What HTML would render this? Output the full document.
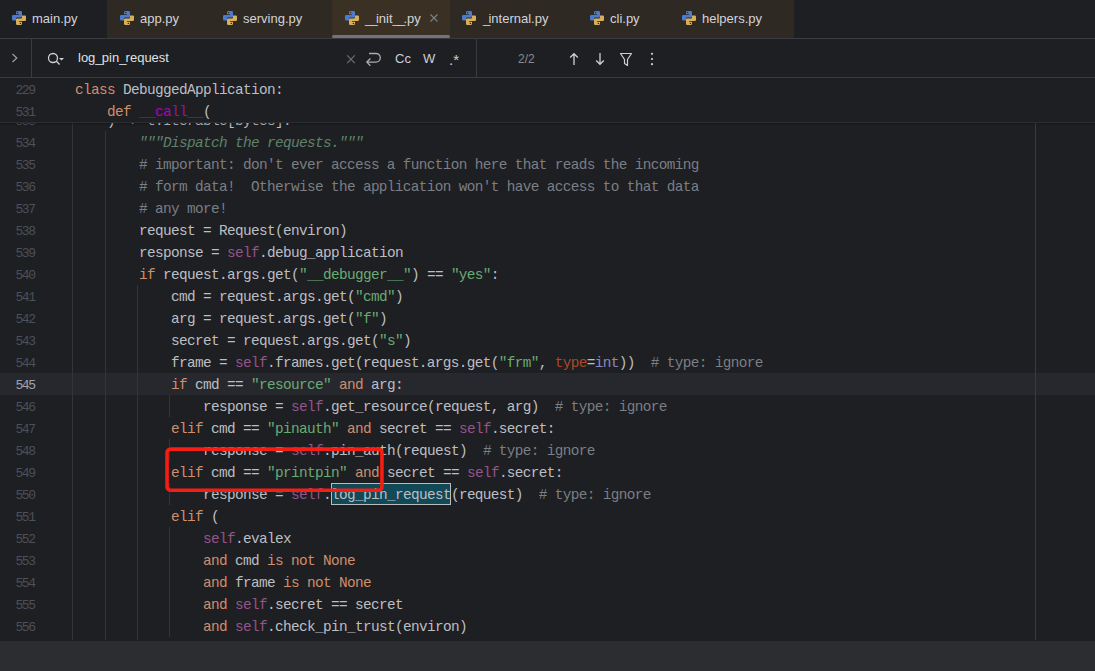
<!DOCTYPE html>
<html><head><meta charset="utf-8">
<style>
html,body{margin:0;padding:0;}
body{width:1095px;height:671px;position:relative;overflow:hidden;background:#1E1F22;font-family:"Liberation Sans",sans-serif;}
.abs{position:absolute;}
.tab{position:absolute;top:0;height:38px;}
.pyi{position:absolute;}
.tt{position:absolute;top:0;height:38px;line-height:38px;font-size:13px;color:#D2D4D9;white-space:pre;}
.ind{position:absolute;top:35px;height:3px;background:#6F737A;border-radius:2px;}
.hl{position:absolute;left:0;width:1095px;height:1px;background:#393B40;}
.vl{position:absolute;width:1px;background:#393B40;}
.ln{position:absolute;left:0;width:34.7px;margin-top:2px;text-align:right;font-family:"Liberation Mono",monospace;font-size:13px;letter-spacing:-1.4px;line-height:22px;height:22px;color:#4B5059;}
.ln.cur{color:#A1A3AB;}
.cl{position:absolute;margin-top:1px;font-family:"Liberation Mono",monospace;font-size:14.4px;letter-spacing:-0.64px;line-height:22px;height:22px;color:#BCBEC4;white-space:pre;}
.u{letter-spacing:-1.8px}
.k{color:#CF8E6D} .s{color:#6AAB73} .c{color:#7A7E85} .d{color:#5F826B;font-style:italic}
.sf{color:#94558D} .mg{color:#B200B2} .kw{color:#AA4926} .bi{color:#8888C6}
.ig{position:absolute;width:1px;background:#313438;}
</style></head><body>
<!-- tabs -->
<div class="tab" style="left:0px;width:107px;background:#1E1F22"></div><svg class="pyi" style="left:12px;top:11px" width="14" height="14" viewBox="0 0 14 14"><path fill="#4A7BD0" d="M4 1.2Q4 0 5.2 0H8.8Q10 0 10 1.2V5.6Q10 6.6 9 6.6H5Q4 6.6 4 7.6V9.5H1.2Q0 9.5 0 8.3V5.2Q0 4 1.2 4H7V3.2H4Z"/><path fill="#D6AF5C" d="M10 12.8Q10 14 8.8 14H5.2Q4 14 4 12.8V8.4Q4 7.4 5 7.4H9Q10 7.4 10 6.4V4.5H12.8Q14 4.5 14 5.7V8.8Q14 10 12.8 10H7V10.8H10Z"/><circle cx="5.6" cy="1.6" r="0.7" fill="#1E1F22"/><circle cx="8.4" cy="12.4" r="0.7" fill="#1E1F22"/></svg><div class="tt" style="left:32px">main.py</div><div class="tab" style="left:107px;width:108px;background:#2E2922"></div><svg class="pyi" style="left:120px;top:11px" width="14" height="14" viewBox="0 0 14 14"><path fill="#4A7BD0" d="M4 1.2Q4 0 5.2 0H8.8Q10 0 10 1.2V5.6Q10 6.6 9 6.6H5Q4 6.6 4 7.6V9.5H1.2Q0 9.5 0 8.3V5.2Q0 4 1.2 4H7V3.2H4Z"/><path fill="#D6AF5C" d="M10 12.8Q10 14 8.8 14H5.2Q4 14 4 12.8V8.4Q4 7.4 5 7.4H9Q10 7.4 10 6.4V4.5H12.8Q14 4.5 14 5.7V8.8Q14 10 12.8 10H7V10.8H10Z"/><circle cx="5.6" cy="1.6" r="0.7" fill="#1E1F22"/><circle cx="8.4" cy="12.4" r="0.7" fill="#1E1F22"/></svg><div class="tt" style="left:140px">app.py</div><div class="tab" style="left:215px;width:117px;background:#2E2922"></div><svg class="pyi" style="left:223px;top:11px" width="14" height="14" viewBox="0 0 14 14"><path fill="#4A7BD0" d="M4 1.2Q4 0 5.2 0H8.8Q10 0 10 1.2V5.6Q10 6.6 9 6.6H5Q4 6.6 4 7.6V9.5H1.2Q0 9.5 0 8.3V5.2Q0 4 1.2 4H7V3.2H4Z"/><path fill="#D6AF5C" d="M10 12.8Q10 14 8.8 14H5.2Q4 14 4 12.8V8.4Q4 7.4 5 7.4H9Q10 7.4 10 6.4V4.5H12.8Q14 4.5 14 5.7V8.8Q14 10 12.8 10H7V10.8H10Z"/><circle cx="5.6" cy="1.6" r="0.7" fill="#1E1F22"/><circle cx="8.4" cy="12.4" r="0.7" fill="#1E1F22"/></svg><div class="tt" style="left:243px">serving.py</div><div class="tab" style="left:332px;width:118px;background:#3A3124"></div><svg class="pyi" style="left:345px;top:11px" width="14" height="14" viewBox="0 0 14 14"><path fill="#4A7BD0" d="M4 1.2Q4 0 5.2 0H8.8Q10 0 10 1.2V5.6Q10 6.6 9 6.6H5Q4 6.6 4 7.6V9.5H1.2Q0 9.5 0 8.3V5.2Q0 4 1.2 4H7V3.2H4Z"/><path fill="#D6AF5C" d="M10 12.8Q10 14 8.8 14H5.2Q4 14 4 12.8V8.4Q4 7.4 5 7.4H9Q10 7.4 10 6.4V4.5H12.8Q14 4.5 14 5.7V8.8Q14 10 12.8 10H7V10.8H10Z"/><circle cx="5.6" cy="1.6" r="0.7" fill="#1E1F22"/><circle cx="8.4" cy="12.4" r="0.7" fill="#1E1F22"/></svg><div class="tt" style="left:365px"><span class="u">_</span><span class="u">_</span>init<span class="u">_</span><span class="u">_</span>.py</div><div class="ind" style="left:332px;width:118px"></div><svg style="position:absolute;left:428px;top:12px" width="12" height="12" viewBox="0 0 12 12"><path d="M2.5 2.5L9.5 9.5M9.5 2.5L2.5 9.5" stroke="#7E8188" stroke-width="1.1"/></svg><div class="tab" style="left:450px;width:120px;background:#2E2922"></div><svg class="pyi" style="left:462px;top:11px" width="14" height="14" viewBox="0 0 14 14"><path fill="#4A7BD0" d="M4 1.2Q4 0 5.2 0H8.8Q10 0 10 1.2V5.6Q10 6.6 9 6.6H5Q4 6.6 4 7.6V9.5H1.2Q0 9.5 0 8.3V5.2Q0 4 1.2 4H7V3.2H4Z"/><path fill="#D6AF5C" d="M10 12.8Q10 14 8.8 14H5.2Q4 14 4 12.8V8.4Q4 7.4 5 7.4H9Q10 7.4 10 6.4V4.5H12.8Q14 4.5 14 5.7V8.8Q14 10 12.8 10H7V10.8H10Z"/><circle cx="5.6" cy="1.6" r="0.7" fill="#1E1F22"/><circle cx="8.4" cy="12.4" r="0.7" fill="#1E1F22"/></svg><div class="tt" style="left:483px"><span class="u">_</span>internal.py</div><div class="tab" style="left:570px;width:92px;background:#2E2922"></div><svg class="pyi" style="left:590px;top:11px" width="14" height="14" viewBox="0 0 14 14"><path fill="#4A7BD0" d="M4 1.2Q4 0 5.2 0H8.8Q10 0 10 1.2V5.6Q10 6.6 9 6.6H5Q4 6.6 4 7.6V9.5H1.2Q0 9.5 0 8.3V5.2Q0 4 1.2 4H7V3.2H4Z"/><path fill="#D6AF5C" d="M10 12.8Q10 14 8.8 14H5.2Q4 14 4 12.8V8.4Q4 7.4 5 7.4H9Q10 7.4 10 6.4V4.5H12.8Q14 4.5 14 5.7V8.8Q14 10 12.8 10H7V10.8H10Z"/><circle cx="5.6" cy="1.6" r="0.7" fill="#1E1F22"/><circle cx="8.4" cy="12.4" r="0.7" fill="#1E1F22"/></svg><div class="tt" style="left:610px">cli.py</div><div class="tab" style="left:662px;width:132px;background:#2E2922"></div><svg class="pyi" style="left:682px;top:11px" width="14" height="14" viewBox="0 0 14 14"><path fill="#4A7BD0" d="M4 1.2Q4 0 5.2 0H8.8Q10 0 10 1.2V5.6Q10 6.6 9 6.6H5Q4 6.6 4 7.6V9.5H1.2Q0 9.5 0 8.3V5.2Q0 4 1.2 4H7V3.2H4Z"/><path fill="#D6AF5C" d="M10 12.8Q10 14 8.8 14H5.2Q4 14 4 12.8V8.4Q4 7.4 5 7.4H9Q10 7.4 10 6.4V4.5H12.8Q14 4.5 14 5.7V8.8Q14 10 12.8 10H7V10.8H10Z"/><circle cx="5.6" cy="1.6" r="0.7" fill="#1E1F22"/><circle cx="8.4" cy="12.4" r="0.7" fill="#1E1F22"/></svg><div class="tt" style="left:702px">helpers.py</div>
<div class="hl" style="top:38px"></div>
<!-- find bar -->
<div class="vl" style="left:31px;top:39px;height:38px"></div>
<div class="vl" style="left:476px;top:39px;height:38px"></div>
<svg class="abs" style="left:10px;top:52px" width="10" height="12" viewBox="0 0 10 12"><path d="M2.5 2L6.8 6L2.5 10" fill="none" stroke="#9DA0A8" stroke-width="1.2"/></svg>
<svg class="abs" style="left:46px;top:50px" width="20" height="18" viewBox="0 0 20 18"><circle cx="7" cy="8" r="4.5" fill="none" stroke="#CED0D6" stroke-width="1.3"/><path d="M10.4 11.3L13.6 14.5" stroke="#CED0D6" stroke-width="1.3"/><path d="M13 8H18L15.5 10.6Z" fill="#CED0D6"/></svg>
<div class="abs" style="left:78px;top:39px;height:38px;line-height:38px;font-size:13px;color:#DFE1E5">log<span style="letter-spacing:-0.8px">_</span>pin<span style="letter-spacing:-0.8px">_</span>request</div>
<svg class="abs" style="left:345px;top:53px" width="12" height="12" viewBox="0 0 12 12"><path d="M2.2 2.45L9.8 10.05M9.8 2.45L2.2 10.05" stroke="#6F737A" stroke-width="1.1"/></svg>
<svg class="abs" style="left:364px;top:51px" width="18" height="16" viewBox="0 0 18 16"><path d="M5 2.5H12A4.3 4.3 0 0 1 12 11.1H2.8M6.4 7.5L2.8 11.1L6.4 14.7" fill="none" stroke="#A8ABB0" stroke-width="1.3"/></svg>
<div class="abs" style="left:395px;top:40px;height:38px;line-height:38px;font-size:13px;color:#CED0D6">Cc</div>
<div class="abs" style="left:423px;top:40px;height:38px;line-height:38px;font-size:13px;color:#CED0D6">W</div>
<div class="abs" style="left:449px;top:41px;height:38px;line-height:38px;font-size:15px;color:#CED0D6">.*</div>
<div class="abs" style="left:518px;top:40px;height:38px;line-height:38px;font-size:12px;color:#868A91">2/2</div>
<svg class="abs" style="left:566px;top:51px" width="16" height="16" viewBox="0 0 16 16"><path d="M8 2.5V14M4.2 6.5L8 2.7L11.8 6.5" fill="none" stroke="#CED0D6" stroke-width="1.3"/></svg>
<svg class="abs" style="left:592px;top:51px" width="16" height="16" viewBox="0 0 16 16"><path d="M8 2V13.5M4.2 9.5L8 13.3L11.8 9.5" fill="none" stroke="#CED0D6" stroke-width="1.3"/></svg>
<svg class="abs" style="left:618px;top:51px" width="16" height="16" viewBox="0 0 16 16"><path d="M2.5 2.5H13.5L9.5 8.5V14.5L6.5 12.5V8.5Z" fill="none" stroke="#CED0D6" stroke-width="1.2" stroke-linejoin="round"/></svg>
<svg class="abs" style="left:644px;top:51px" width="16" height="16" viewBox="0 0 16 16"><circle cx="8" cy="2.8" r="1.1" fill="#CED0D6"/><circle cx="8" cy="8" r="1.1" fill="#CED0D6"/><circle cx="8" cy="13.2" r="1.1" fill="#CED0D6"/></svg>
<div class="hl" style="top:77px"></div>
<!-- editor -->
<div class="abs" style="left:0;top:373px;width:1095px;height:22px;background:#26282E"></div>
<div class="ig" style="left:72px;top:123px;height:517px"></div>
<div class="ig" style="left:105px;top:131px;height:509px"></div>
<div class="ig" style="left:137px;top:285px;height:355px"></div>
<div class="ig" style="left:169px;top:527px;height:110px"></div>
<div class="ig" style="left:169px;top:395px;height:22px"></div>
<div class="ig" style="left:169px;top:439px;height:22px"></div>
<div class="ig" style="left:169px;top:483px;height:22px"></div>
<div class="ig" style="left:1035px;top:78px;height:562px;background:#393B40"></div>
<div class="abs" style="left:331px;top:483px;width:118px;height:20px;background:#114957;border:1px solid #BBBBBB"></div>
<div class="ln" style="top:109px">533</div><div class="cl" style="top:109px;left:107px">) -&gt; t.Iterable[bytes]:</div><div class="ln" style="top:131px">534</div><div class="cl" style="top:131px;left:139px"><span class="d">&quot;&quot;&quot;Dispatch the requests.&quot;&quot;&quot;</span></div><div class="ln" style="top:153px">535</div><div class="cl" style="top:153px;left:139px"><span class="c"># important: don&#x27;t ever access a function here that reads the incoming</span></div><div class="ln" style="top:175px">536</div><div class="cl" style="top:175px;left:139px"><span class="c"># form data!  Otherwise the application won&#x27;t have access to that data</span></div><div class="ln" style="top:197px">537</div><div class="cl" style="top:197px;left:139px"><span class="c"># any more!</span></div><div class="ln" style="top:219px">538</div><div class="cl" style="top:219px;left:139px">request = Request(environ)</div><div class="ln" style="top:241px">539</div><div class="cl" style="top:241px;left:139px">response = <span class="sf">self</span>.debug_application</div><div class="ln" style="top:263px">540</div><div class="cl" style="top:263px;left:139px"><span class="k">if</span> request.args.get(<span class="s">&quot;__debugger__&quot;</span>) == <span class="s">&quot;yes&quot;</span>:</div><div class="ln" style="top:285px">541</div><div class="cl" style="top:285px;left:171px">cmd = request.args.get(<span class="s">&quot;cmd&quot;</span>)</div><div class="ln" style="top:307px">542</div><div class="cl" style="top:307px;left:171px">arg = request.args.get(<span class="s">&quot;f&quot;</span>)</div><div class="ln" style="top:329px">543</div><div class="cl" style="top:329px;left:171px">secret = request.args.get(<span class="s">&quot;s&quot;</span>)</div><div class="ln" style="top:351px">544</div><div class="cl" style="top:351px;left:171px">frame = <span class="sf">self</span>.frames.get(request.args.get(<span class="s">&quot;frm&quot;</span>, <span class="kw">type</span>=<span class="bi">int</span>))  <span class="c"># type: ignore</span></div><div class="ln cur" style="top:373px">545</div><div class="cl" style="top:373px;left:171px"><span class="k">if</span> cmd == <span class="s">&quot;resource&quot;</span> <span class="k">and</span> arg:</div><div class="ln" style="top:395px">546</div><div class="cl" style="top:395px;left:203px">response = <span class="sf">self</span>.get_resource(request, arg)  <span class="c"># type: ignore</span></div><div class="ln" style="top:417px">547</div><div class="cl" style="top:417px;left:171px"><span class="k">elif</span> cmd == <span class="s">&quot;pinauth&quot;</span> <span class="k">and</span> secret == <span class="sf">self</span>.secret:</div><div class="ln" style="top:439px">548</div><div class="cl" style="top:439px;left:203px">response = <span class="sf">self</span>.pin_auth(request)  <span class="c"># type: ignore</span></div><div class="ln" style="top:461px">549</div><div class="cl" style="top:461px;left:171px"><span class="k">elif</span> cmd == <span class="s">&quot;printpin&quot;</span> <span class="k">and</span> secret == <span class="sf">self</span>.secret:</div><div class="ln" style="top:483px">550</div><div class="cl" style="top:483px;left:203px">response = <span class="sf">self</span>.log_pin_request(request)  <span class="c"># type: ignore</span></div><div class="ln" style="top:505px">551</div><div class="cl" style="top:505px;left:171px"><span class="k">elif</span> (</div><div class="ln" style="top:527px">552</div><div class="cl" style="top:527px;left:203px"><span class="sf">self</span>.evalex</div><div class="ln" style="top:549px">553</div><div class="cl" style="top:549px;left:203px"><span class="k">and</span> cmd <span class="k">is</span> <span class="k">not</span> <span class="k">None</span></div><div class="ln" style="top:571px">554</div><div class="cl" style="top:571px;left:203px"><span class="k">and</span> frame <span class="k">is</span> <span class="k">not</span> <span class="k">None</span></div><div class="ln" style="top:593px">555</div><div class="cl" style="top:593px;left:203px"><span class="k">and</span> <span class="sf">self</span>.secret == secret</div><div class="ln" style="top:615px">556</div><div class="cl" style="top:615px;left:203px"><span class="k">and</span> <span class="sf">self</span>.check_pin_trust(environ)</div>
<!-- sticky -->
<div class="abs" style="left:0;top:78px;width:1095px;height:44px;background:#1E1F22"></div>
<div class="abs" style="left:0;top:122px;width:1095px;height:1px;background:#2B2D30"></div>
<div class="abs" style="left:0;top:123px;width:1095px;height:3px;background:linear-gradient(rgba(0,0,0,0.22),rgba(0,0,0,0))"></div>
<div class="ln" style="top:78px">229</div>
<div class="cl" style="top:78px;left:75px"><span class="k">class</span> DebuggedApplication:</div>
<div class="ln" style="top:100px">531</div>
<div class="cl" style="top:100px;left:107px"><span class="k">def</span> <span class="mg">__call__</span>(</div>
<svg class="abs" style="left:155px;top:437px" width="240" height="65" viewBox="155 437 240 65"><rect x="167.05" y="449.1" width="214.9" height="41.2" rx="3.5" fill="none" stroke="#F41E14" stroke-width="3.6"/></svg>
<!-- bottom -->
<div class="abs" style="left:0;top:641px;width:1095px;height:30px;background:#2B2D30"></div>
</body></html>
